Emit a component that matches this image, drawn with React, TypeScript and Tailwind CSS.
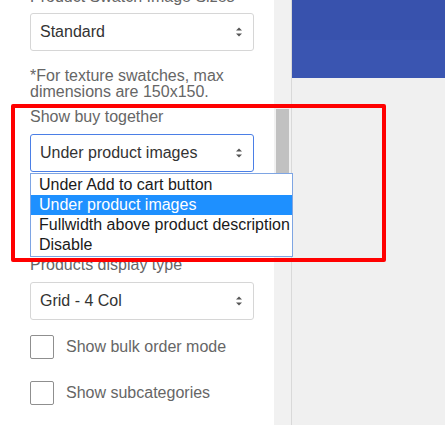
import React from "react";

const Arrows = () => (
  <svg width="8" height="10" viewBox="0 0 8 10" className="shrink-0">
    <path d="M1 3.5 L4 0.5 L7 3.5 Z" fill="#555" />
    <path d="M1 6.5 L4 9.5 L7 6.5 Z" fill="#555" />
  </svg>
);

const SelectBox = ({ value, focused }: { value: string; focused?: boolean }) => (
  <div
    className={`h-[38px] w-[224px] rounded-[3px] border flex items-center justify-between pl-[9px] pr-[10px] bg-white text-[16px] text-[#333] ${
      focused ? "border-[#4b7fe6]" : "border-[#d6d6d6]"
    }`}
  >
    <span>{value}</span>
    <Arrows />
  </div>
);

const Label = ({ children, className = "" }: { children: React.ReactNode; className?: string }) => (
  <div className={`h-[18px] leading-[18px] text-[16px] text-[#666] whitespace-nowrap ${className}`}>{children}</div>
);

const Check = ({ label, className = "" }: { label: string; className?: string }) => (
  <div className={`flex items-center gap-[12px] h-[24px] ${className}`}>
    <div className="w-[24px] h-[24px] rounded-[2px] border border-[#8f8f8f] bg-white" />
    <span className="text-[16px] text-[#666] whitespace-nowrap">{label}</span>
  </div>
);

export default function App() {
  const options = [
    "Under Add to cart button",
    "Under product images",
    "Fullwidth above product description",
    "Disable",
  ];
  return (
    <div
      className="relative w-[445px] h-[425px] overflow-hidden flex bg-[#f0f0f0]"
      style={{ fontFamily: '"Liberation Sans", Arial, sans-serif' }}
    >
      {/* Left form panel */}
      <div className="w-[274px] h-full bg-white pl-[30px] pr-[20px] flex flex-col shrink-0">
        <Label className="mt-[-12px] mb-[7px]">Product Swatch Image Sizes</Label>
        <SelectBox value="Standard" />
        <div className="mt-[17px] text-[16px] leading-[16px] text-[#666]">
          *For texture swatches, max
          <br />
          dimensions are 150x150.
        </div>
        <Label className="mt-[8px] mb-[8px]">Show buy together</Label>
        <div className="relative">
          <SelectBox value="Under product images" focused />
          <div className="absolute z-10 left-0 top-[39px] w-[263px] bg-white border border-[#7ea5e3] py-[1px]">
            {options.map((o) => (
              <div
                key={o}
                className={`h-[20px] leading-[20px] pl-[8px] text-[16px] whitespace-nowrap ${
                  o === "Under product images" ? "bg-[#1e90ff] text-white" : "text-[#1a1a1a]"
                }`}
              >
                {o}
              </div>
            ))}
          </div>
        </div>
        <Label className="mt-[84px] mb-[8px]">Products display type</Label>
        <SelectBox value="Grid - 4 Col" />
        <Check label="Show bulk order mode" className="mt-[15px]" />
        <Check label="Show subcategories" className="mt-[22px]" />
      </div>

      {/* Scrollbar */}
      <div className="relative w-[17px] h-full bg-[#f1f1f1] shrink-0">
        <div className="absolute left-[2px] top-[109px] w-[13px] h-[120px] bg-[#c1c1c1]" />
      </div>
      <div className="w-[1px] h-full bg-[#d9d9d9] shrink-0" />

      {/* Right area */}
      <div className="flex-1 h-full flex flex-col bg-[#f0f0f0]">
        <div className="h-[40px] bg-[#3852ad]" />
        <div className="h-[38px] bg-[#3a55b1]" />
      </div>

      {/* Red annotation box */}
      <div className="absolute left-[11px] top-[104px] w-[375px] h-[158px] border-4 border-[#ff0000] rounded-[2px] z-20 pointer-events-none" />
    </div>
  );
}
